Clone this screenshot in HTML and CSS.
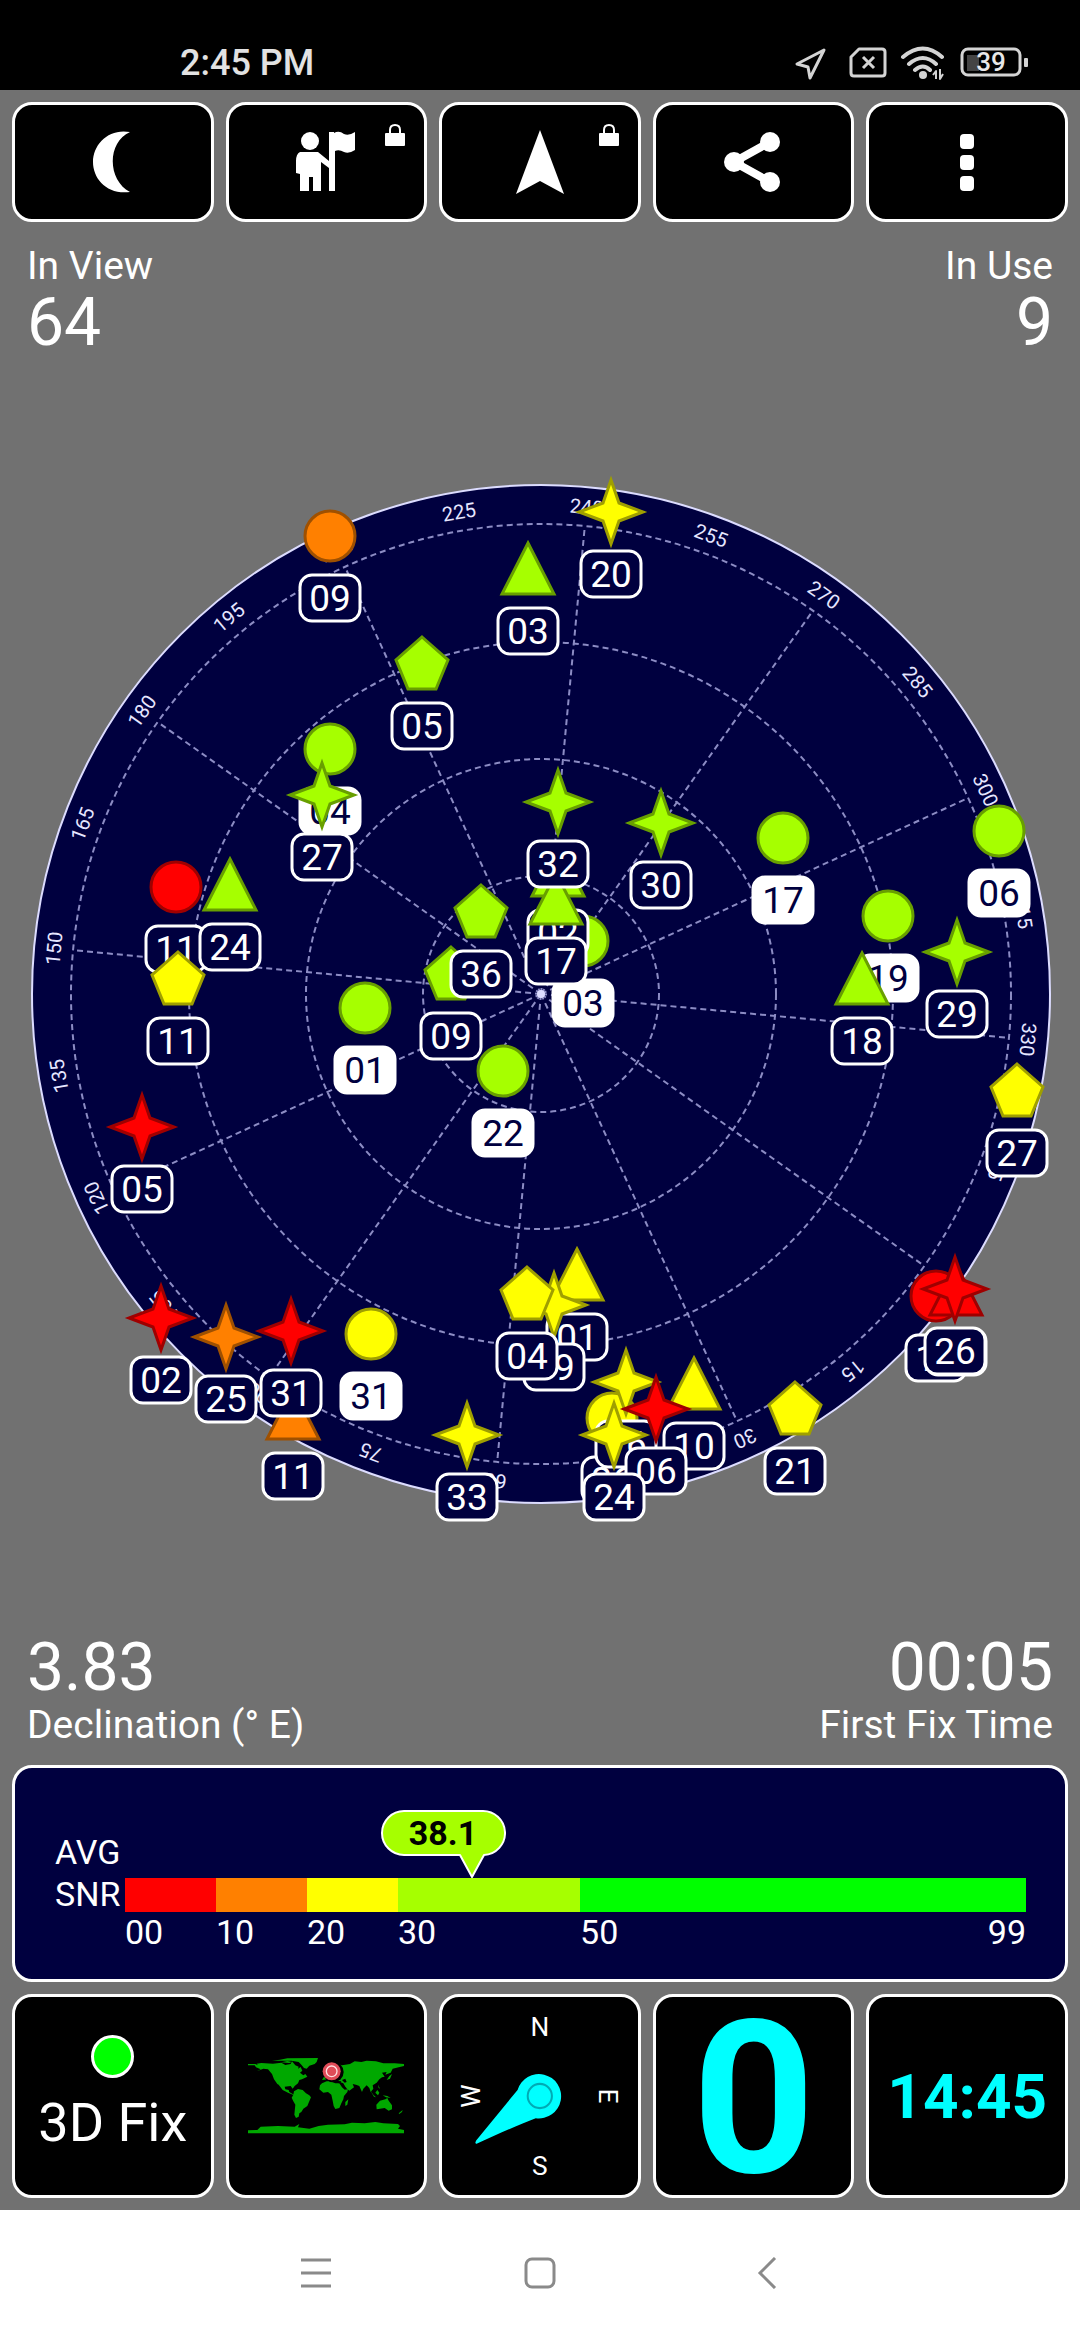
FILE: index.html
```
<!DOCTYPE html>
<html lang="en">

<head>
  <meta charset="UTF-8">
  <meta name="viewport" content="width=device-width, initial-scale=1.0">
  <title>GPS Status</title>

  <link rel="stylesheet" href="styles.css">
</head>

<body>
  <header class="status-bar">
    <span class="status-time">2:45 PM</span>
    <svg class="status-icons" viewBox="0 0 236 36" aria-hidden="true">
      <path class="status-line" d="M32 5 L5 19 L16 22 L18 33 Z" />
      <path class="status-line" d="M67 4 H90 Q93 4 93 7 V28 Q93 31 90 31 H62 Q59 31 59 28 V12 Z" />
      <path class="status-line" d="M71 12 L82 23 M82 12 L71 23" />
      <path class="wifi-line" d="M111 12 Q131 -5 150 12 M117 19 Q131 7 144 19 M123 25 Q131 18 138 25" />
      <circle class="status-fill" cx="131" cy="30" r="4" />
      <path class="status-line thin" d="M144 34 V26 L141 30 M148 24 V34 L151 29" />
      <rect class="battery-level" x="175" y="10" width="12" height="16" />
      <rect class="status-line" x="170" y="4" width="58" height="26" rx="6" />
      <rect class="status-fill" x="232" y="13" width="4" height="9" rx="1" />
      <text class="battery-text" x="199" y="26">39</text>
    </svg>
  </header>

  <main>
    <div class="toolbar">
      <button class="tile" aria-label="Night mode">
        <svg class="icon" viewBox="0 0 64 64">
          <path d="M49 2 C26 12 26 50 49 62 C26 65 12 49 12 32 C12 14 28 -2 49 2 Z" />
        </svg>
      </button>
      <button class="tile" aria-label="Guide">
        <svg class="icon" viewBox="0 0 64 64">
          <circle cx="16" cy="11" r="9" />
          <path d="M6 22 H24 L35 31 V2 H40 V3 Q45 0 50 4 Q55 6 61 2 V20 Q55 24 50 22 Q45 19 41 21 V61 H35 V38 L27 32 V61 H19 V47 H15 V61 H6 V44 L2 43 V31 Q2 24 6 22 Z" />
        </svg>
        <svg class="lock" viewBox="0 0 20 22">
          <path class="lock-bow" d="M5 11 V6 Q5 1 10 1 Q15 1 15 6 V11" />
          <rect y="9" width="20" height="13" rx="1" />
        </svg>
      </button>
      <button class="tile" aria-label="Compass heading">
        <svg class="icon" viewBox="0 0 64 64">
          <path d="M32 0 L56 64 L32 51 L8 64 Z" />
        </svg>
        <svg class="lock" viewBox="0 0 20 22">
          <path class="lock-bow" d="M5 11 V6 Q5 1 10 1 Q15 1 15 6 V11" />
          <rect y="9" width="20" height="13" rx="1" />
        </svg>
      </button>
      <button class="tile" aria-label="Share">
        <svg class="icon" viewBox="0 0 64 64">
          <path class="share-line" d="M48 12 L12 32 L48 52" />
          <circle cx="12" cy="32" r="10" />
          <circle cx="48" cy="12" r="10" />
          <circle cx="48" cy="52" r="10" />
        </svg>
      </button>
      <button class="tile" aria-label="More options">
        <svg class="icon" viewBox="0 0 64 64">
          <rect x="25" y="4" width="14" height="15" rx="4" />
          <rect x="25" y="25" width="14" height="15" rx="4" />
          <rect x="25" y="46" width="14" height="15" rx="4" />
        </svg>
      </button>
    </div>

    <div class="info info-top">
      <div>
        <div class="info-label">In View</div>
        <div class="info-value">64</div>
      </div>
      <div class="info-right">
        <div class="info-label">In Use</div>
        <div class="info-value">9</div>
      </div>
    </div>

    <svg id="sky" class="sky" viewBox="-541 -624 1080 1250" role="img" aria-label="Satellites in view">
      <circle class="sky-disc" r="509" />
      <g id="grid"></g>
      <g id="satellites"></g>
    </svg>

    <div class="info info-bottom">
      <div>
        <div class="info-value">3.83</div>
        <div class="info-label">Declination (° E)</div>
      </div>
      <div class="info-right">
        <div class="info-value">00:05</div>
        <div class="info-label">First Fix Time</div>
      </div>
    </div>

    <section class="snr">
      <div class="snr-label">AVG<br>SNR</div>
      <div class="snr-chart">
        <svg class="bubble" viewBox="0 0 126 70">
          <path class="bubble-shape" d="M24 2 H102 A22 22 0 0 1 104 46 L92 68 L80 46 H24 A22 22 0 0 1 24 2 Z" />
          <text class="bubble-text" x="63" y="36">38.1</text>
        </svg>
        <div class="snr-scale snr-bar">
          <span class="level-red"></span>
          <span class="level-orange"></span>
          <span class="level-yellow"></span>
          <span class="level-lime"></span>
          <span class="level-green"></span>
        </div>
        <div class="snr-scale snr-ticks">
          <span>00</span>
          <span>10</span>
          <span>20</span>
          <span>30</span>
          <span class="last-tick"><span>50</span><span>99</span></span>
        </div>
      </div>
    </section>

    <div class="widgets">
      <button class="tile fix">
        <span class="fix-dot"></span>
        <span>3D Fix</span>
      </button>
      <button class="tile" aria-label="World map">
        <svg class="map" viewBox="0 0 468 226">
          <path class="land" d="M0 18 H22 L30 22 26 17 40 15 75 17 100 14 112 21 128 18 132 10 142 22 152 26 150 32 158 27 163 38 156 44 166 52 172 48 178 56 162 64 154 66 150 76 140 84 134 92 128 84 110 86 112 94 122 96 124 102 134 108 144 114 138 112 120 104 104 96 92 80 88 78 78 64 72 48 60 34 46 32 26 40 38 34 24 28 20 22 0 22 Z" />
          <path class="land" d="M72 8 L96 5 118 1 210 0 206 12 200 18 184 23 176 32 168 30 160 20 152 12 130 8 Z M100 13 118 9 132 12 124 15 Z" />
          <path class="land" d="M138 100 L150 93 164 96 174 106 184 112 189 118 182 134 178 144 166 152 160 162 154 166 152 176 144 180 139 170 142 140 136 130 131 119 136 110 Z" />
          <path class="land" d="M222 76 L236 70 248 70 262 76 274 76 282 88 290 95 300 94 298 102 288 114 286 124 280 136 274 150 262 153 257 144 254 128 250 110 240 102 226 104 214 94 216 82 Z" />
          <path class="land" d="M222 66 L228 56 242 48 244 40 234 34 246 26 268 18 282 22 306 18 320 10 340 12 356 8 384 10 406 16 440 16 468 18 V24 L452 28 434 32 428 44 412 50 416 42 402 44 410 56 402 58 394 64 386 74 374 82 376 92 368 102 364 90 356 82 346 92 342 102 334 84 324 80 314 78 318 88 304 98 294 90 286 76 276 72 260 68 250 62 Z" />
          <path class="land" d="M385 140 L396 128 412 124 418 120 422 128 432 142 432 154 422 158 410 150 396 152 386 154 Z M292 132 301 124 298 140 292 144 Z M366 96 376 110 384 118 378 116 Z M388 96 394 104 390 112 382 104 Z M404 112 418 114 428 120 414 118 Z M424 54 432 48 426 62 416 66 Z M390 80 396 92 392 90 Z M452 166 464 156 462 162 454 168 Z" />
          <path class="land" d="M0 217 L28 216 38 206 90 204 140 206 154 198 150 208 184 212 212 204 240 200 290 199 312 194 350 196 382 192 406 196 450 198 456 204 450 212 468 216 V226 H0 Z" />
          <path class="sea" d="M254 60 L264 68 280 70 276 76 262 74 250 64 Z M282 66 292 62 296 72 290 74 Z M284 80 298 92 292 90 Z" />
          <circle class="sea" cx="256" cy="42" r="31" />
          <circle class="pin" cx="251" cy="40" r="27" />
          <circle class="pin-ring" cx="251" cy="40" r="16" />
          <circle class="pin-core" cx="251" cy="40" r="11" />
        </svg>
      </button>
      <button class="tile" aria-label="Compass">
        <svg class="compass" viewBox="-96 -98 192 196">
          <text class="compass-text" y="-59">N</text>
          <text class="compass-text" y="78">S</text>
          <text class="compass-text" transform="rotate(90)" y="-59">E</text>
          <text class="compass-text" transform="rotate(-90)" y="-59">W</text>
          <path class="needle" d="M-22 -6 A22 22 0 1 1 -4 22 C-20 28 -42 38 -62 47 Q-65 48 -63 44 Z" />
          <circle class="needle-hub" r="12" />
        </svg>
      </button>
      <button class="tile speed">0</button>
      <button class="tile clock">14:45</button>
    </div>
  </main>

  <nav class="nav-bar">
    <button class="nav-btn" aria-label="Recent apps">
      <svg viewBox="0 0 32 32"><path d="M2 3 H32 M2 16 H32 M2 29 H32" /></svg>
    </button>
    <button class="nav-btn" aria-label="Home">
      <svg viewBox="0 0 32 32"><rect x="2" y="2" width="28" height="28" rx="6" /></svg>
    </button>
    <button class="nav-btn" aria-label="Back">
      <svg viewBox="0 0 32 32"><path d="M26 1 L11 16 L26 31" /></svg>
    </button>
  </nav>

  <script>
    const SVG = 'http://www.w3.org/2000/svg';
    const HEADING = 234.65;

    // outlines drawn around the satellite's own position
    const shapes = {
      circle: 'M-25 0 A25 25 0 1 1 25 0 A25 25 0 1 1 -25 0 Z',
      triangle: 'M0 -26 L26 25 H-26 Z',
      pentagon: 'M0 -27 L26 -4 L14 25 H-14 L-26 -4 Z',
      star: 'M0 -32 L8 -9 L32 0 L8 9 L0 32 L-8 9 L-32 0 L-8 -9 Z'
    };

    // id, shape, signal, x, y, used in fix
    const satellites = [
      ['09', 'circle', 'orange', -211, -458],
      ['03', 'triangle', 'lime', -13, -425],
      ['20', 'star', 'yellow', 70, -482],
      ['05', 'pentagon', 'lime', -119, -330],
      ['04', 'circle', 'lime', -211, -245, true],
      ['27', 'star', 'lime', -219, -199],
      ['11', 'circle', 'red', -365, -107],
      ['24', 'triangle', 'lime', -311, -109],
      ['11', 'pentagon', 'yellow', -363, -15],
      ['30', 'star', 'lime', 120, -171],
      ['17', 'circle', 'lime', 242, -156, true],
      ['06', 'circle', 'lime', 458, -163, true],
      ['19', 'circle', 'lime', 347, -78, true],
      ['29', 'star', 'lime', 416, -42],
      ['18', 'triangle', 'lime', 321, -15],
      ['27', 'pentagon', 'yellow', 476, 97],
      ['03', 'circle', 'lime', 42, -53, true],
      ['02', 'triangle', 'lime', 17, -123],
      ['17', 'triangle', 'lime', 15, -95],
      ['32', 'star', 'lime', 17, -192],
      ['09', 'pentagon', 'lime', -90, -20],
      ['36', 'pentagon', 'lime', -60, -82],
      ['01', 'circle', 'lime', -176, 14, true],
      ['22', 'circle', 'lime', -38, 77, true],
      ['05', 'star', 'red', -399, 133],
      ['11', 'triangle', 'orange', -248, 420],
      ['02', 'star', 'red', -380, 324],
      ['25', 'star', 'orange', -315, 343],
      ['31', 'star', 'red', -250, 337],
      ['31', 'circle', 'yellow', -170, 340, true],
      ['33', 'star', 'yellow', -74, 441],
      ['01', 'triangle', 'yellow', 36, 281],
      ['19', 'star', 'yellow', 13, 311],
      ['04', 'pentagon', 'yellow', -14, 300],
      ['26', 'circle', 'yellow', 71, 424],
      ['10', 'triangle', 'yellow', 153, 390],
      ['16', 'star', 'yellow', 85, 388],
      ['06', 'star', 'red', 115, 415],
      ['24', 'star', 'yellow', 73, 441],
      ['21', 'pentagon', 'yellow', 254, 415],
      ['14', 'circle', 'red', 395, 302],
      ['04', 'triangle', 'red', 415, 296],
      ['26', 'star', 'red', 414, 295]
    ];

    function add(parent, tag, attrs, text) {
      const el = document.createElementNS(SVG, tag);
      for (const name in attrs) {
        el.setAttribute(name, attrs[name]);
      }
      if (text) {
        el.textContent = text;
      }
      parent.appendChild(el);
      return el;
    }

    function drawGrid() {
      const grid = document.querySelector('#grid');
      [118, 235, 352, 470].forEach(r => add(grid, 'circle', { class: 'grid-line', r }));
      for (let az = 0; az < 360; az += 15) {
        const turn = `rotate(${az - HEADING})`;
        if (az % 30 === 0) {
          add(grid, 'line', { class: 'grid-line', y2: -470, transform: turn });
        }
        add(grid, 'text', { class: 'azimuth', y: -482, transform: turn }, String(az));
      }
      add(grid, 'circle', { class: 'zenith', r: 4 });
    }

    function drawSatellites() {
      const layer = document.querySelector('#satellites');
      satellites.forEach(([id, shape, signal, x, y, used]) => {
        const g = add(layer, 'g', { class: used ? 'sat used' : 'sat', transform: `translate(${x} ${y})` });
        add(g, 'path', { class: `sat-shape ${signal}`, d: shapes[shape] });
        add(g, 'rect', { class: 'sat-box', x: -30, y: 39, width: 60, height: 46, rx: 12 });
        add(g, 'text', { class: 'sat-id', y: 75 }, id);
      });
    }

    drawGrid();
    drawSatellites();
  </script>
</body>

</html>
```
FILE: styles.css
```
* {
  box-sizing: border-box;
}

body {
  background: #717171;
  color: white;
  display: flex;
  flex-direction: column;
  font-family: Roboto, "Liberation Sans", sans-serif;
  margin: 0;
  min-height: 100vh;
}

button {
  background: none;
  border: none;
  color: inherit;
  font: inherit;
  padding: 0;
}

button:hover {
  cursor: pointer;
}

.status-bar {
  align-items: center;
  background: black;
  color: #e2e2e2;
  display: flex;
  height: 90px;
  justify-content: space-between;
  padding: 36px 52px 0 180px;
}

.status-time {
  font-size: 36px;
  font-weight: 500;
}

.status-icons {
  height: 36px;
  width: 236px;
}

.status-line {
  fill: none;
  stroke: #d4d4d4;
  stroke-linejoin: round;
  stroke-width: 3px;
}

.thin {
  stroke-width: 2px;
}

.wifi-line {
  fill: none;
  stroke: #d4d4d4;
  stroke-linecap: round;
  stroke-width: 4px;
}

.status-fill {
  fill: #d4d4d4;
}

.battery-level {
  fill: #444;
}

.battery-text {
  fill: #e8e8e8;
  font-size: 26px;
  font-weight: 500;
  text-anchor: middle;
}

main {
  display: flex;
  flex: 1;
  flex-direction: column;
  padding: 12px;
}

.toolbar,
.widgets {
  display: grid;
  gap: 12px;
  grid-template-columns: repeat(5, 1fr);
}

.tile {
  align-items: center;
  background: black;
  border: 3px solid white;
  border-radius: 20px;
  display: flex;
  justify-content: center;
  min-width: 0;
  position: relative;
}

.toolbar .tile {
  height: 120px;
}

.widgets .tile {
  height: 204px;
}

.icon {
  fill: white;
  height: 64px;
  width: 64px;
}

.share-line {
  fill: none;
  stroke: white;
  stroke-width: 8px;
}

.lock {
  fill: white;
  height: 22px;
  position: absolute;
  right: 19px;
  top: 19px;
  width: 20px;
}

.lock-bow {
  fill: none;
  stroke: white;
  stroke-width: 2px;
}

.info {
  display: flex;
  justify-content: space-between;
  padding: 0 15px;
}

.info-top {
  padding-bottom: 12px;
  padding-top: 22px;
}

.info-bottom {
  padding-bottom: 18px;
  padding-top: 13px;
}

.info-right {
  text-align: right;
}

.info-label {
  font-size: 39px;
  line-height: 44px;
}

.info-value {
  font-size: 66px;
  line-height: 70px;
}

.sky {
  display: block;
  margin: 0 -12px;
}

.sky-disc {
  fill: #00003f;
  stroke: #dcdcff;
  stroke-width: 2px;
}

.grid-line {
  fill: none;
  stroke: #8c8cc4;
  stroke-dasharray: 6 4;
  stroke-width: 2px;
}

.zenith {
  fill: #dcdcff;
}

.azimuth {
  fill: #e6e6ff;
  font-size: 20px;
  text-anchor: middle;
}

.sat-shape {
  stroke-width: 3px;
}

.lime {
  fill: #a6ff00;
  stroke: #689f00;
}

.yellow {
  fill: #ff0;
  stroke: #9f9f00;
}

.orange {
  fill: #ff8000;
  stroke: #9f5000;
}

.red {
  fill: red;
  stroke: #9f0000;
}

.sat-box {
  fill: #00003f;
  stroke: white;
  stroke-width: 3px;
}

.sat-id {
  fill: white;
  font-size: 37px;
  text-anchor: middle;
}

.used .sat-box {
  fill: white;
}

.used .sat-id {
  fill: #00003f;
}

.snr {
  background: #00003f;
  border: 3px solid white;
  border-radius: 20px;
  display: flex;
  font-size: 34px;
  line-height: 42px;
  margin-bottom: 12px;
  padding: 63px 39px 27px 40px;
}

.snr-label {
  width: 70px;
}

.snr-chart {
  flex: 1;
  padding-top: 47px;
  position: relative;
}

.snr-scale {
  display: grid;
  grid-template-columns: 10fr 10fr 10fr 20fr 49fr;
}

.snr-scale > * {
  min-width: 0;
}

.snr-bar {
  height: 34px;
}

.snr-ticks {
  line-height: 40px;
}

.level-red {
  background: red;
}

.level-orange {
  background: #ff8000;
}

.level-yellow {
  background: #ff0;
}

.level-lime {
  background: #a6ff00;
}

.level-green {
  background: lime;
}

.last-tick {
  display: flex;
  justify-content: space-between;
}

/* the tail sits 92px into the bubble and points at 38.1 of 99 */
.bubble {
  height: 70px;
  left: calc(38.5% - 92px);
  position: absolute;
  top: -22px;
  width: 126px;
}

.bubble-shape {
  fill: #a6ff00;
  stroke: white;
  stroke-linejoin: round;
  stroke-width: 2px;
}

.bubble-text {
  fill: black;
  font-size: 34px;
  font-weight: 700;
  text-anchor: middle;
}

.widgets .fix {
  flex-direction: column;
  font-size: 54px;
  gap: 10px;
  line-height: 70px;
}

.fix-dot {
  background: lime;
  border: 3px solid white;
  border-radius: 50%;
  height: 43px;
  width: 43px;
}

.map {
  max-width: 100%;
  width: 156px;
}

.land {
  fill: #00a800;
}

.sea {
  fill: black;
}

.pin,
.pin-core {
  fill: #e04c58;
}

.pin-ring {
  fill: none;
  stroke: #ffe0e0;
  stroke-width: 4px;
}

.compass {
  height: 100%;
  width: 100%;
}

.compass-text {
  fill: white;
  font-size: 26px;
  text-anchor: middle;
}

.needle {
  fill: cyan;
}

.needle-hub {
  fill: none;
  stroke: #00aab4;
  stroke-width: 2px;
}

.widgets .speed {
  color: cyan;
  font-size: 214px;
  font-weight: 700;
  line-height: 192px;
  padding-top: 6px;
}

.widgets .clock {
  color: cyan;
  font-size: 62px;
  font-weight: 700;
}

.nav-bar {
  background: white;
  display: flex;
  height: 130px;
  justify-content: center;
}

.nav-btn {
  width: 225px;
}

.nav-btn svg {
  fill: none;
  height: 32px;
  stroke: #8a8a8a;
  stroke-width: 3px;
  width: 32px;
}
```
